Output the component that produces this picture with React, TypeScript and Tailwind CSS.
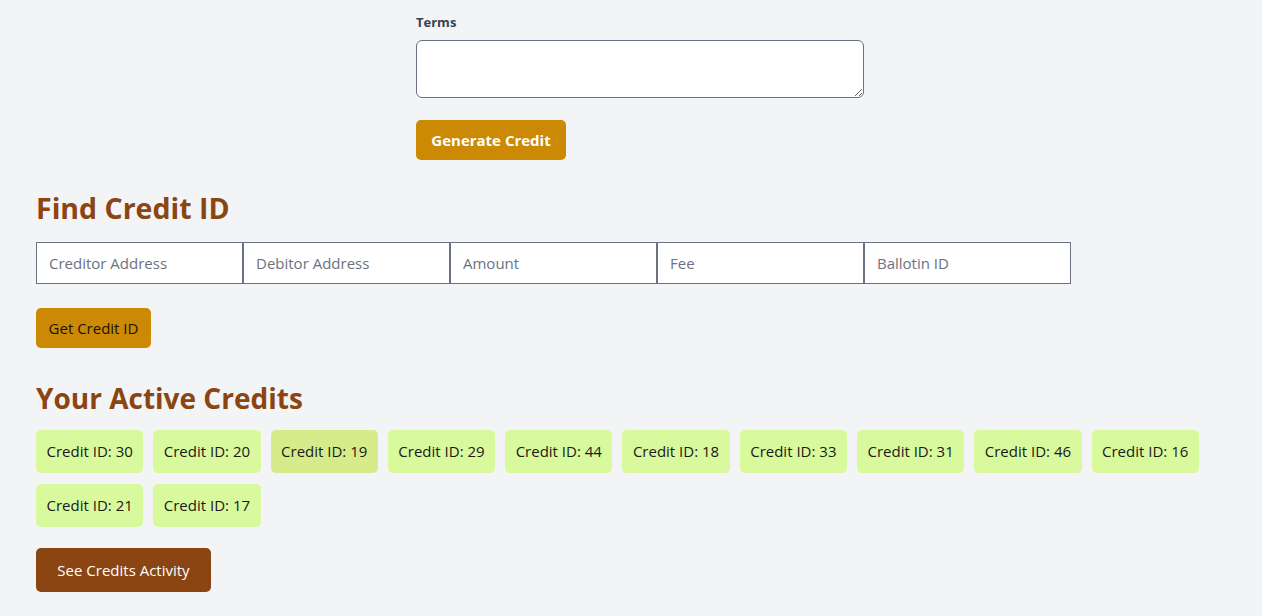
import { useState } from 'react';

const credits = [30, 20, 19, 29, 44, 18, 33, 31, 46, 16, 21, 17];
const fields = ['Creditor Address', 'Debitor Address', 'Amount', 'Fee', 'Ballotin ID'];

export default function App() {
  const [terms, setTerms] = useState('');
  const [values, setValues] = useState<string[]>(fields.map(() => ''));

  return (
    <div
      className="min-h-[616px] bg-[#f3f4f6] px-9 pt-[14px] text-[15px]"
      style={{ fontFamily: '"Open Sans", "Noto Sans", sans-serif' }}
    >
      <div className="ml-[380px] w-[448px]">
        <label className="block text-[13px] font-bold text-[#374151] leading-4">Terms</label>
        <textarea
          value={terms}
          onChange={(e) => setTerms(e.target.value)}
          className="mt-[10px] block h-[58px] w-[448px] rounded-md border border-[#6b7280] bg-white px-3 py-2"
        />
        <button
          type="button"
          className="mt-[22px] h-10 w-[150px] rounded-[5px] bg-[#cc8a04] text-[15px] font-bold text-white"
        >
          Generate Credit
        </button>
      </div>

      <h2 className="mt-[30px] text-[28.5px] font-bold leading-9 text-[#8b4513]">Find Credit ID</h2>
      <div className="mt-[16px] flex">
        {fields.map((f, i) => (
          <input
            key={f}
            value={values[i]}
            onChange={(e) => setValues(values.map((v, j) => (j === i ? e.target.value : v)))}
            placeholder={f}
            className="h-[42px] w-[207px] border border-[#6b7280] bg-white px-3 text-[15px] text-[#111827] placeholder:text-[#6b7280] outline-none"
          />
        ))}
      </div>
      <button
        type="button"
        className="mt-[24px] h-10 w-[115px] rounded-[5px] bg-[#cc8a04] text-[15px] text-[#1a1204]"
      >
        Get Credit ID
      </button>

      <h2 className="mt-[32px] text-[28px] font-bold leading-9 text-[#8b4513]">Your Active Credits</h2>
      <div className="mt-[14px] flex w-[1180px] flex-wrap gap-x-[10px] gap-y-[11px]">
        {credits.map((c) => (
          <button
            type="button"
            key={c}
            className={`h-[43px] rounded-[5px] px-[10.5px] text-[15px] text-[#1a1a1a] ${
              c === 19 ? 'bg-[#d6ec8a]' : 'bg-[#d9f99d]'
            }`}
          >
            Credit ID: {c}
          </button>
        ))}
      </div>
      <button
        type="button"
        className="mt-[21px] h-11 w-[175px] rounded-[5px] bg-[#8b4513] text-[15px] text-white"
      >
        See Credits Activity
      </button>
    </div>
  );
}
